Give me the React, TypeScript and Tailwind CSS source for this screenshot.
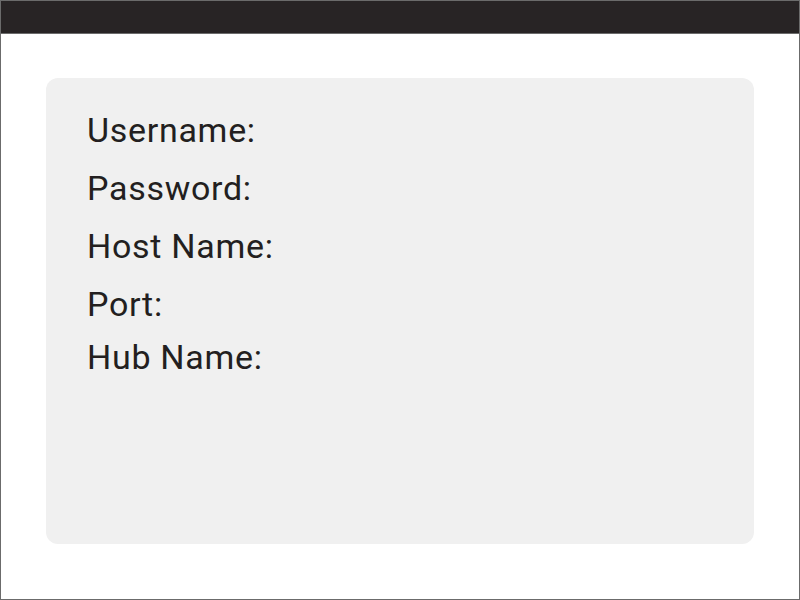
const fields = ["Username:", "Password:", "Host Name:", "Port:"];

export default function App() {
  return (
    <div className="w-[800px] h-[600px] border border-[#6b6b6b] bg-white flex flex-col font-['Roboto',sans-serif]">
      <div className="h-[33px] shrink-0 bg-[#282425] border-b border-[#6b6b6b]"></div>
      <div className="mt-[44px] ml-[45px] w-[708px] h-[466px] rounded-xl bg-[#f0f0f0] pt-[32px] pl-[41px]">
        <div className="flex flex-col gap-[18px] text-[34px] leading-[40px] tracking-[0.7px] text-[#231f20]">
          {fields.map((label) => (
            <div key={label}>{label}</div>
          ))}
        </div>
        <div className="mt-[13px] text-[34px] leading-[40px] tracking-[0.7px] text-[#231f20]">Hub Name:</div>
      </div>
    </div>
  );
}
